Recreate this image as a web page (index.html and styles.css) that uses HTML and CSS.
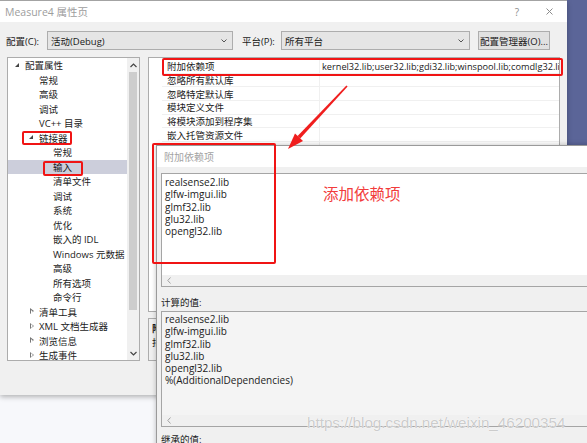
FILE: index.html
```html
<!DOCTYPE html>
<html lang="zh-CN">
<head>
    <meta charset="UTF-8">
    <meta name="viewport" content="width=device-width, initial-scale=1.0">
    <title>Measure4 属性页</title>
    <link rel="stylesheet" href="styles.css">
</head>
<body>
<div class="desktop">

    <!-- property pages window -->
    <div class="window main-window">
        <div class="titlebar">
            <span class="title">Measure4 属性页</span>
            <span class="title-help">?</span>
            <svg class="title-close" width="7" height="7" viewBox="0 0 7 7"><path d="M0.5 0.5L6.5 6.5M6.5 0.5L0.5 6.5" stroke="#8c8c8c" stroke-width="1"/></svg>
        </div>

        <div class="config-row">
            <label class="config-label">配置(C):</label>
            <div class="combo combo-config">
                <span>活动(Debug)</span>
                <svg width="6" height="4" viewBox="0 0 6 4"><path d="M0.5 0.5L3 3L5.5 0.5" fill="none" stroke="#555" stroke-width="1"/></svg>
            </div>
            <label class="config-label platform-label">平台(P):</label>
            <div class="combo combo-platform">
                <span>所有平台</span>
                <svg width="6" height="4" viewBox="0 0 6 4"><path d="M0.5 0.5L3 3L5.5 0.5" fill="none" stroke="#555" stroke-width="1"/></svg>
            </div>
            <button class="config-manager">配置管理器(O)...</button>
        </div>

        <div class="panes">
            <div class="tree">
                <ul class="tree-list">
                    <li class="lvl0"><span class="toggle open"></span>配置属性</li>
                    <li class="leaf1">常规</li>
                    <li class="leaf1">高级</li>
                    <li class="leaf1">调试</li>
                    <li class="leaf1">VC++ 目录</li>
                    <li class="lvl1"><span class="toggle open"></span>链接器</li>
                    <li class="leaf2">常规</li>
                    <li class="leaf2 selected">输入</li>
                    <li class="leaf2">清单文件</li>
                    <li class="leaf2">调试</li>
                    <li class="leaf2">系统</li>
                    <li class="leaf2">优化</li>
                    <li class="leaf2">嵌入的 IDL</li>
                    <li class="leaf2">Windows 元数据</li>
                    <li class="leaf2">高级</li>
                    <li class="leaf2">所有选项</li>
                    <li class="leaf2">命令行</li>
                    <li class="lvl1"><span class="toggle closed"></span>清单工具</li>
                    <li class="lvl1"><span class="toggle closed"></span>XML 文档生成器</li>
                    <li class="lvl1"><span class="toggle closed"></span>浏览信息</li>
                    <li class="lvl1"><span class="toggle closed"></span>生成事件</li>
                </ul>
                <div class="vscroll">
                    <svg class="scroll-btn" width="7" height="5" viewBox="0 0 7 5"><path d="M0.5 4L3.5 1L6.5 4" fill="none" stroke="#444" stroke-width="1.2"/></svg>
                    <div class="thumb"></div>
                    <svg class="scroll-btn" width="7" height="5" viewBox="0 0 7 5"><path d="M0.5 1L3.5 4L6.5 1" fill="none" stroke="#444" stroke-width="1.2"/></svg>
                </div>
            </div>

            <div class="props">
                <div class="grid">
                    <div class="grid-row"><span class="prop-name">附加依赖项</span><span class="prop-value">kernel32.lib;user32.lib;gdi32.lib;winspool.lib;comdlg32.lib;advapi32.lib</span></div>
                    <div class="grid-row"><span class="prop-name">忽略所有默认库</span><span class="prop-value"></span></div>
                    <div class="grid-row"><span class="prop-name">忽略特定默认库</span><span class="prop-value"></span></div>
                    <div class="grid-row"><span class="prop-name">模块定义文件</span><span class="prop-value"></span></div>
                    <div class="grid-row"><span class="prop-name">将模块添加到程序集</span><span class="prop-value"></span></div>
                    <div class="grid-row"><span class="prop-name">嵌入托管资源文件</span><span class="prop-value"></span></div>
                    <div class="grid-row"><span class="prop-name">强制符号引用</span><span class="prop-value"></span></div>
                    <div class="grid-row"><span class="prop-name">延迟加载的 DLL</span><span class="prop-value"></span></div>
                    <div class="grid-row"><span class="prop-name">程序集链接资源</span><span class="prop-value"></span></div>
                </div>
                <div class="desc">
                    <p class="desc-title">附加依赖项</p>
                    <p>指定要添加到链接命令行的附加项。</p>
                </div>
            </div>
        </div>
    </div>

    <!-- additional dependencies editor -->
    <div class="window deps-window">
        <div class="titlebar deps-titlebar">
            <span class="title">附加依赖项</span>
        </div>
        <div class="deps-body">
            <div class="textbox editable">
                <div class="lines">
                    <div>realsense2.lib</div>
                    <div>glfw-imgui.lib</div>
                    <div>glmf32.lib</div>
                    <div>glu32.lib</div>
                    <div>opengl32.lib</div>
                </div>
                <div class="hscroll">
                    <svg width="4" height="7" viewBox="0 0 4 7"><path d="M3.5 0.5L0.8 3.5L3.5 6.5" fill="none" stroke="#a0a0a0" stroke-width="1"/></svg>
                </div>
            </div>
            <div class="field-label">计算的值:</div>
            <div class="textbox readonly">
                <div class="lines">
                    <div>realsense2.lib</div>
                    <div>glfw-imgui.lib</div>
                    <div>glmf32.lib</div>
                    <div>glu32.lib</div>
                    <div>opengl32.lib</div>
                    <div>%(AdditionalDependencies)</div>
                </div>
                <div class="hscroll">
                    <svg width="4" height="7" viewBox="0 0 4 7"><path d="M3.5 0.5L0.8 3.5L3.5 6.5" fill="none" stroke="#a0a0a0" stroke-width="1"/></svg>
                </div>
            </div>
            <div class="field-label inherited">继承的值:</div>
        </div>
    </div>

    <!-- red notes drawn on top -->
    <div class="mark mark-linker"></div>
    <div class="mark mark-input"></div>
    <div class="mark mark-grid"></div>
    <div class="mark mark-list"></div>
    <div class="note">添加依赖项</div>
    <svg class="pointer" width="587" height="443" viewBox="0 0 587 443">
        <polygon points="347.6,86.4 346.4,85.6 297.6,136.1 300.2,138.5" fill="#f01e1e"/>
        <polygon points="288,149 295,133.6 303,141" fill="#f01e1e"/>
    </svg>

    <div class="watermark">https://blog.csdn.net/weixin_46200354</div>
</div>
</body>
</html>
```

FILE: styles.css
```css
* {
    box-sizing: border-box;
}

html, body {
    margin: 0;
}

body {
    font-family: "Open Sans", "Noto Sans CJK SC", sans-serif;
    font-size: 9.5px;
    color: #1b1b1b;
}

.desktop {
    position: relative;
    width: 587px;
    height: 443px;
    overflow: hidden;
    background: linear-gradient(#5b6598 0, #5b6598 200px, #f7f8fb 200px);
}

.window {
    position: absolute;
}

/* ---------- main window ---------- */

.main-window {
    left: 0;
    top: 0;
    width: 567px;
    height: 395px;
    background-color: #f0f0f0;
    border-top: 1px solid #a3a3a3;
    box-shadow: 0 2px 5px rgba(0, 0, 0, 0.28);
}

.titlebar {
    height: 21px;
    background-color: #fff;
    display: flex;
    align-items: center;
    padding-left: 5px;
}

.title {
    flex: 1;
    color: #9d9d9d;
    font-size: 10.5px;
}

.title-help {
    color: #8c8c8c;
    font-size: 10px;
    margin-right: 27px;
}

.title-close {
    margin-right: 14px;
}

.config-row {
    display: flex;
    align-items: center;
    height: 19px;
    margin-top: 9px;
    padding-left: 6px;
}

.config-label {
    width: 41px;
}

.platform-label {
    width: 39px;
    margin-left: 9px;
}

.combo {
    height: 19px;
    display: flex;
    align-items: center;
    justify-content: space-between;
    padding: 0 5px 0 3px;
    background-color: #e5e5e5;
    border: 1px solid #adadad;
}

.combo-config {
    width: 186px;
}

.combo-platform {
    width: 189px;
}

.config-manager {
    width: 72px;
    height: 19px;
    margin-left: 8px;
    padding: 0;
    font: inherit;
    color: #1b1b1b;
    background-color: #e1e1e1;
    border: 1px solid #adadad;
}

.panes {
    display: flex;
    gap: 8px;
    margin-top: 7px;
    padding-left: 7px;
}

/* ---------- settings tree ---------- */

.tree {
    width: 133px;
    height: 304px;
    display: flex;
    background-color: #fff;
    border: 1px solid #acacac;
}

.tree-list {
    flex: 1;
    list-style: none;
    margin: 0;
    padding: 0;
}

.tree-list li {
    height: 14.5px;
    display: flex;
    align-items: center;
    white-space: nowrap;
}

.tree-list .lvl0 { padding-left: 7px; }
.tree-list .lvl1 { padding-left: 21px; }
.tree-list .leaf1 { padding-left: 31px; }
.tree-list .leaf2 { padding-left: 45px; }

.tree-list .selected {
    background-color: #cccedb;
}

.toggle {
    width: 10px;
    height: 5px;
    position: relative;
}

.toggle.open::before {
    content: "";
    position: absolute;
    left: 0;
    top: 0;
    border-style: solid;
    border-width: 0 0 4px 4px;
    border-color: transparent transparent #444 transparent;
}

.toggle.closed::before {
    content: "";
    position: absolute;
    left: 1px;
    top: -1px;
    width: 0;
    height: 0;
    border-style: solid;
    border-width: 3.5px 0 3.5px 4px;
    border-color: transparent transparent transparent #777;
}

.toggle.closed::after {
    content: "";
    position: absolute;
    left: 2px;
    top: 0.5px;
    border-style: solid;
    border-width: 2px 0 2px 2px;
    border-color: transparent transparent transparent #fff;
}

.vscroll {
    width: 12px;
    display: flex;
    flex-direction: column;
    align-items: center;
    background-color: #f0f0f0;
    padding: 5px 0 4px;
}

.vscroll .thumb {
    width: 8px;
    height: 238px;
    margin-top: 4px;
    background-color: #cdcdcd;
    margin-bottom: auto;
}

/* ---------- property grid ---------- */

.props {
    width: 412px;
}

.grid {
    height: 255px;
    background-color: #fff;
    border: 1px solid #acacac;
    padding: 2px 0 0 13px;
    overflow: hidden;
}

.grid-row {
    display: flex;
    height: 13.7px;
    align-items: center;
    border-bottom: 1px solid #f0f0f0;
    white-space: nowrap;
}

.prop-name {
    width: 158px;
    padding-left: 5px;
    border-right: 1px solid #f0f0f0;
    align-self: stretch;
    display: flex;
    align-items: center;
}

.prop-value {
    flex: 1;
    padding-left: 2px;
    overflow: hidden;
    font-size: 9.2px;
}

.desc {
    height: 43px;
    margin-top: 6px;
    border: 1px solid #acacac;
    padding: 3px 0 0 3px;
}

.desc p {
    margin: 0;
    line-height: 14px;
}

.desc .desc-title {
    font-weight: bold;
}

/* ---------- dependencies editor ---------- */

.deps-window {
    left: 156px;
    top: 145px;
    width: 470px;
    height: 310px;
    background-color: #f0f0f0;
    border: 1px solid #9a9a9a;
    box-shadow: 0 0 5px rgba(0, 0, 0, 0.25);
}

.deps-titlebar {
    height: 21px;
    padding-left: 7px;
}

.deps-titlebar .title {
    font-size: 10px;
    color: #a3a3a3;
}

.deps-body {
    padding: 6px 0 0 4px;
}

.textbox {
    width: 460px;
    display: flex;
    flex-direction: column;
    border: 1px solid #a5a5a5;
    font-size: 10px;
}

.textbox.editable {
    height: 114px;
    background-color: #fff;
}

.textbox.readonly {
    height: 116px;
    background-color: #f4f4f4;
}

.textbox .lines {
    flex: 1;
    padding: 2px 0 0 3px;
    line-height: 12.3px;
}

.textbox.readonly .lines {
    padding-top: 1px;
}

.hscroll {
    height: 11px;
    display: flex;
    align-items: center;
    padding-left: 5px;
    background-color: #f0f0f0;
}

.field-label {
    margin-top: 9px;
    height: 13px;
    line-height: 13px;
    margin-bottom: 2px;
}

.field-label.inherited {
    margin-top: 6px;
}

/* ---------- red notes ---------- */

.mark {
    position: absolute;
    border: 2px solid #f01414;
    border-radius: 2px;
}

.mark-linker {
    left: 22px;
    top: 131px;
    width: 50px;
    height: 14px;
}

.mark-input {
    left: 43px;
    top: 161px;
    width: 40px;
    height: 15px;
}

.mark-grid {
    left: 162px;
    top: 58px;
    width: 401px;
    height: 18px;
}

.mark-list {
    left: 152px;
    top: 143px;
    width: 124px;
    height: 121px;
}

.note {
    position: absolute;
    left: 323px;
    top: 182px;
    font-family: "Noto Sans CJK SC", sans-serif;
    font-size: 15.5px;
    line-height: 22px;
    color: #f23c3c;
}

.pointer {
    position: absolute;
    left: 0;
    top: 0;
}

.watermark {
    position: absolute;
    left: 307px;
    top: 414px;
    font-family: "Liberation Sans", sans-serif;
    font-size: 15.2px;
    color: rgba(160, 160, 160, 0.55);
    text-shadow: 0 0 1px #fff, 0 0 1px #fff;
    white-space: nowrap;
}
```
